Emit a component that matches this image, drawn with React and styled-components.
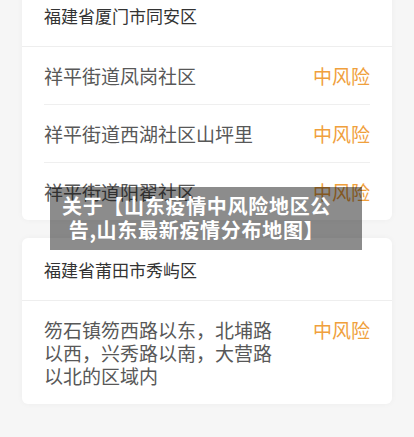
import React from 'react';
import styled, {createGlobalStyle} from 'styled-components';

const GlobalStyle = createGlobalStyle`
  html, body {
    margin: 0;
    padding: 0;
    background: #f6f6f6;
    font-family: "Noto Sans CJK SC", "Noto Sans", sans-serif;
  }
`;

const Page = styled.div`
  position: relative;
  width: 414px;
  height: 437px;
  overflow: hidden;
  box-sizing: border-box;
  padding: 0 22px;
`;

const List = styled.div`
  display: flex;
  flex-direction: column;
  gap: 18px;
  margin-top: -16px;
`;

const Card = styled.div`
  background: #fff;
  border-radius: 6px;
  box-shadow: 0 0 6px rgba(0, 0, 0, 0.04);
`;

const CardHeader = styled.div`
  height: 62px;
  display: flex;
  align-items: center;
  padding: 0 22px;
  border-bottom: 1px solid #eeeeee;
  font-size: 17px;
  color: #333;
`;

const Row = styled.div`
  display: flex;
  justify-content: space-between;
  align-items: flex-start;
  margin: 0 22px;
  padding: 17px 0;
  line-height: 23px;
  font-size: 19px;
  color: #585858;
  border-bottom: ${p => (p.last ? 'none' : '1px solid #efefef')};
`;

const Place = styled.div`
  max-width: 232px;
`;

const Risk = styled.div`
  color: #f0a03c;
  white-space: nowrap;
`;

const Caption = styled.div`
  position: absolute;
  left: 50px;
  top: 187px;
  width: 312px;
  box-sizing: border-box;
  padding: 7px 30px 8px 11px;
  background: rgba(0, 0, 0, 0.45);
  color: #fff;
  font-size: 20px;
  font-weight: 700;
  letter-spacing: 0.7px;
  line-height: 24px;
  text-align: center;
`;

const cards = [
  {
    header: '福建省厦门市同安区',
    rows: [
      ['祥平街道凤岗社区', '中风险'],
      ['祥平街道西湖社区山坪里', '中风险'],
      ['祥平街道阳翟社区', '中风险'],
    ],
  },
  {
    header: '福建省莆田市秀屿区',
    rows: [['笏石镇笏西路以东，北埔路以西，兴秀路以南，大营路以北的区域内', '中风险']],
  },
];

export default function App() {
  return (
    <Page>
      <GlobalStyle />
      <List>
        {cards.map(card => (
          <Card key={card.header}>
            <CardHeader>{card.header}</CardHeader>
            {card.rows.map(([place, risk], i) => (
              <Row key={place} last={i === card.rows.length - 1}>
                <Place>{place}</Place>
                <Risk>{risk}</Risk>
              </Row>
            ))}
          </Card>
        ))}
      </List>
      <Caption>关于【山东疫情中风险地区公告,山东最新疫情分布地图】</Caption>
    </Page>
  );
}
